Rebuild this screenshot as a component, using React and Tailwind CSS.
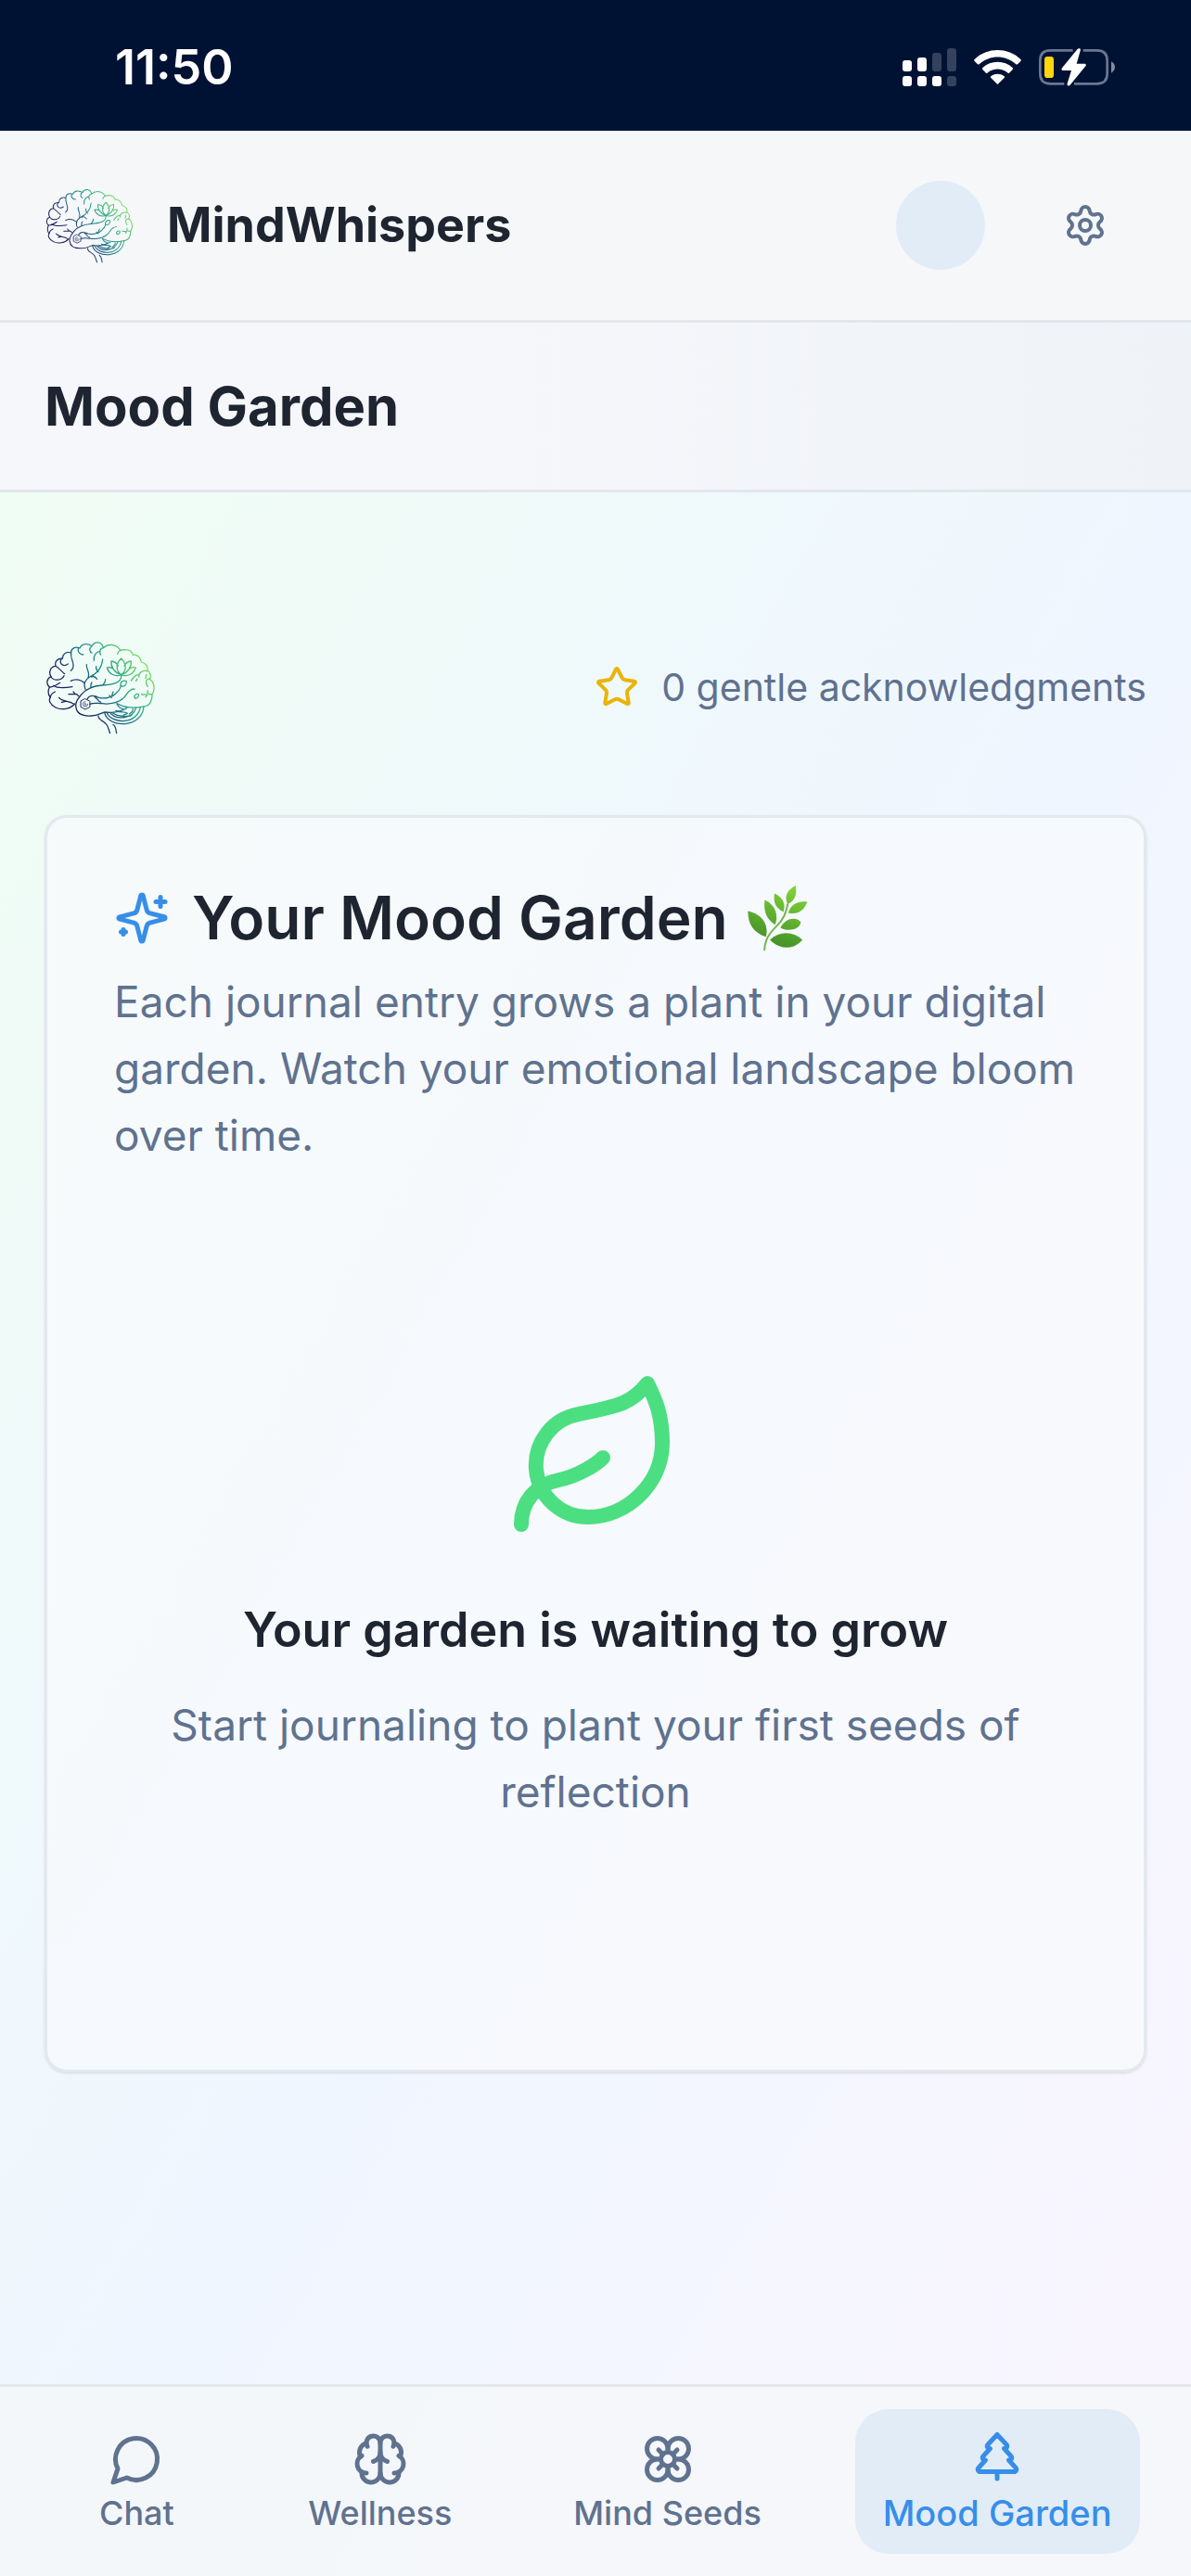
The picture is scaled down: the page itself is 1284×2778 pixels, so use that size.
import { Brain, Flower, Leaf, Settings, Star, TreePine } from "lucide-react";

const navItems = [
  { label: "Chat", icon: ChatBubble },
  { label: "Wellness", icon: Brain },
  { label: "Mind Seeds", icon: Flower },
  { label: "Mood Garden", icon: TreePine, active: true },
];

function ChatBubble({ size = 24 }) {
  return (
    <svg width={size} height={size} viewBox="0 0 24 24" fill="none" stroke="currentColor" strokeWidth="2" strokeLinecap="round" strokeLinejoin="round" aria-hidden="true">
      <path d="M7.9 20A9 9 0 1 0 4 16.1L2 22Z" />
    </svg>
  );
}

function SparklesIcon() {
  return (
    <svg className="size-[60px] shrink-0 text-[#378ee8]" viewBox="0 0 24 24" fill="none" stroke="currentColor" strokeWidth="2" strokeLinecap="round" strokeLinejoin="round" aria-hidden="true">
      <path d="M9.937 15.5A2 2 0 0 0 8.5 14.063l-6.135-1.582a.5.5 0 0 1 0-.962L8.5 9.936A2 2 0 0 0 9.937 8.5l1.582-6.135a.5.5 0 0 1 .963 0L14.063 8.5A2 2 0 0 0 15.5 9.937l6.135 1.581a.5.5 0 0 1 0 .964L15.5 14.063a2 2 0 0 0-1.437 1.437l-1.582 6.135a.5.5 0 0 1-.963 0z" />
      <path d="M20 3v4" />
      <path d="M22 5h-4" />
      <path d="M4 17v2" />
      <path d="M5 18H3" />
    </svg>
  );
}

function HerbIcon() {
  return (
    <svg className="h-[72px] w-[66px] shrink-0" viewBox="30 37 200 218" role="img" aria-label="Herb">
      <defs>
        <linearGradient id="herb" gradientUnits="userSpaceOnUse" x1="190" y1="40" x2="120" y2="240">
          <stop offset="0" stopColor="#84d338" />
          <stop offset="0.5" stopColor="#62b430" />
          <stop offset="1" stopColor="#438f28" />
        </linearGradient>
      </defs>
      <g fill="url(#herb)">
        <path d="M190 40C160 56 152 76 164 101C184 92 196 72 190 40Z" />
        <path d="M121 66C116 94 124 114 150 126C158 102 150 80 121 66Z" />
        <path d="M89 87C84 128 96 150 123 168C134 138 126 104 89 87Z" />
        <path d="M34 123C34 166 52 194 93 207C102 170 84 134 34 123Z" />
        <path d="M228 93C196 90 174 102 166 129C194 136 216 124 228 93Z" />
        <path d="M207 160C196 142 158 142 140 178C160 190 202 188 207 160Z" />
        <path d="M212 217C180 188 138 188 106 217C136 250 184 252 212 217Z" />
      </g>
      <path d="M88 250C90 216 102 198 128 172C150 150 158 132 164 101" fill="none" stroke="#74b54a" strokeWidth="6" strokeLinecap="round" />
    </svg>
  );
}

function BrainLogo({ id, className }) {
  return (
    <svg className={className} viewBox="54 33 360 360" role="img" aria-label="MindWhispers logo">
      <defs>
        <linearGradient id={id} gradientUnits="userSpaceOnUse" x1="130" y1="224" x2="332" y2="84">
          <stop offset="0" stopColor="#20205f" />
          <stop offset="0.14" stopColor="#1d356c" />
          <stop offset="0.33" stopColor="#1b6280" />
          <stop offset="0.5" stopColor="#208a88" />
          <stop offset="0.7" stopColor="#35b07c" />
          <stop offset="1" stopColor="#70da5c" />
        </linearGradient>
      </defs>
      <g fill="none" stroke={`url(#${id})`} strokeWidth="3.8" strokeLinecap="round" strokeLinejoin="round">
        {/* outer folds */}
        <path d="M152 267C138 285 108 288 90 279C72 270 66 255 73 246C64 236 66 222 70 213C58 203 61 185 75 179C66 164 74 146 90 145C86 130 96 119 112 121C112 104 126 97 140 102C139 88 154 80 168 87C176 70 196 72 207 80C218 62 240 66 244 86C262 70 288 74 300 95M290 106C294 88 334 86 340 109C356 106 364 120 368 132C382 136 390 148 387 161C398 166 399 178 394 187C410 196 412 224 402 236C402 262 390 275 372 276C345 282 315 280 290 267" />
        <path d="M75 180C84 194 110 192 117 176M90 145C98 148 104 158 119 170M108 122C100 140 118 148 130 138M140 102C136 120 152 134 146 150C145 154 142 158 139 160M163 88C160 100 170 108 179 108M207 80C196 88 200 100 208 102M244 86C230 88 232 104 236 108M232 97C218 100 212 114 214 127" />
        <path d="M70 213C80 214 95 205 104 199M83 208C95 218 120 216 144 212M73 246C73 238 80 232 88 228M132 236H158L165 242M147 228L154 236M101 247C110 260 128 256 148 267M109 262L122 259" />
        <path d="M242 123C240 150 222 170 200 180C184 190 178 202 186 220M190 140C188 155 202 164 195 184M221 146C219 155 224 160 228 164M139 193C156 184 174 190 181 198M206 180C214 176 220 181 224 187M207 198C202 204 204 208 204 214M251 188C251 198 246 202 243 206" />
        <path d="M387 161C370 158 358 166 359 180M358 174C348 170 340 184 334 192M354 186L350 193M394 187C382 184 378 200 388 211M383 172L381 184M402 236C390 238 384 232 388 224M368 236C374 240 380 234 386 238L381 245M358 236C346 232 342 246 348 250C358 248 360 240 358 236Z" />
        {/* temporal lobe and the stem of the lotus */}
        <path d="M302 172C306 202 270 205 240 207C205 210 188 219 174 236C164 249 152 260 156 278C158 300 178 307 204 306C228 306 236 296 250 294C282 299 300 290 320 281" />
        <path d="M192 252C200 234 220 242 230 247C252 252 276 244 284 234C294 226 298 220 301 211M216 244C226 250 226 258 236 262M200 268C216 262 224 266 240 266C268 270 296 262 310 248C322 236 324 220 345 219M276 228L272 240M264 240L271 247M288 266C292 276 300 282 308 283" />
        <path d="M300 209C298 196 308 190 319 194C320 206 312 214 300 209Z" />
        <path d="M186 251L201 259V277L186 285L171 277V259Z" strokeWidth="3" />
        <path d="M186 260A8 8 0 1 0 194 268M186 265A3 3 0 1 0 189 268" strokeWidth="2" />
        {/* lotus */}
        <path d="M302 173C284 160 284 138 302 120C320 138 320 160 302 173ZM302 173C280 166 268 148 270 129C280 130 288 136 292 144M302 173C324 166 336 148 334 129C324 130 316 136 312 144M302 174C280 180 262 170 256 150C262 148 268 149 273 152M302 174C324 180 342 170 349 150C343 148 337 149 331 152" />
        {/* cerebellum and stem */}
        <path d="M248 296C262 348 370 346 375 276M256 296C274 334 354 334 364 278M266 296C284 320 338 318 350 280M274 296C290 308 322 310 336 304M285 289C300 298 312 290 322 298L310 303M340 284C342 292 334 296 328 300" />
        <path d="M228 306C228 322 246 320 256 336C262 346 262 354 266 362M276 334C286 340 284 352 287 362" />
      </g>
    </svg>
  );
}

function StatusBar() {
  return (
    <div className="flex h-[141px] items-center justify-between bg-[#001234] pl-[124px] pr-[82px] pt-1 text-white">
      <time className="text-[52px] font-semibold leading-[56px]">11:50</time>
      <div className="flex items-center gap-[19px]">
        <svg className="h-[41px] w-[58px]" viewBox="219 156 174 123" fill="currentColor" role="img" aria-label="Signal">
          <rect x="219" y="195" width="30" height="36" rx="9" />
          <rect x="267" y="186" width="30" height="45" rx="9" />
          <rect x="219" y="246" width="30" height="33" rx="9" />
          <rect x="267" y="246" width="30" height="33" rx="9" />
          <rect x="315" y="246" width="30" height="33" rx="9" />
          <g opacity="0.2">
            <rect x="315" y="171" width="30" height="60" rx="9" />
            <rect x="363" y="156" width="30" height="75" rx="9" />
            <rect x="363" y="246" width="30" height="33" rx="9" />
          </g>
        </svg>
        <svg className="h-[37px] w-[51px]" viewBox="450 162 153 111" fill="currentColor" role="img" aria-label="Wi-Fi">
          <path d="M452 192C492 152 561 152 601 192Q604 195 601 198L591 208Q588 210 585 207C552 177 501 177 468 207Q465 210 462 208L452 198Q449 195 452 192Z" />
          <path d="M478 219C505 194 548 194 575 219Q577 222 575 225L564 236Q561 238 558 235C540 220 513 220 495 235Q492 238 489 236L478 225Q476 222 478 219Z" />
          <path d="M506 246C518 237 535 237 547 246Q551 249 548 252L529 271Q526 274 524 271L505 252Q502 249 506 246Z" />
        </svg>
        <svg className="h-[41px] w-[82px]" viewBox="660 156 246 123" role="img" aria-label="Battery charging">
          <path d="M770 163H697Q664 163 664 196V238Q664 271 697 271H742M803 163H848Q881 163 881 196V238Q881 271 848 271H774" fill="none" stroke="#6b7690" strokeWidth="8" />
          <path d="M894 199Q906 205 906 217T894 236Z" fill="#808aa0" />
          <rect x="678" y="183" width="30" height="69" rx="10" fill="#ffd60a" />
          <path d="M784 160Q788 155 792 157Q796 159 794 164L782 206H809Q815 208 811 214L762 274Q758 279 754 277Q750 275 752 270L765 228H737Q731 226 735 220Z" fill="white" />
        </svg>
      </div>
    </div>
  );
}

export default function App() {
  return (
    <div className="flex min-h-screen flex-col bg-[#f5f7f9] font-[Inter,sans-serif] text-[#1e2530]">
      <StatusBar />

      <header className="flex items-center justify-between border-b-3 border-[#e1e7ec] bg-[#f5f7f9] px-12 py-9">
        <div className="flex items-center gap-9">
          <BrainLogo id="logo-header" className="size-24" />
          <span className="text-[52px] font-bold leading-[84px]">MindWhispers</span>
        </div>
        <div className="flex items-center gap-6">
          <button type="button" aria-label="Profile" className="flex size-[132px] items-center justify-center">
            <span className="size-24 rounded-full bg-[#e1ecf7]" />
          </button>
          <button type="button" aria-label="Settings" className="flex size-[132px] items-center justify-center text-[#5f728f]">
            <Settings size={48} />
          </button>
        </div>
      </header>

      <div className="border-b-3 border-[#e1e6ed] bg-linear-to-r from-[#f5f7fb] via-[#f4f6fa] to-[#eff2f6] px-12 py-12">
        <h1 className="text-[58px] font-bold leading-[84px]">Mood Garden</h1>
      </div>

      <div className="flex flex-1 flex-col bg-linear-to-br from-[#f0fdf4] via-[#eff6ff] to-[#faf5ff]">
        <main className="flex-1 px-12 pb-12 pt-[150px]">
          <div className="flex items-center justify-between">
            <BrainLogo id="logo-garden" className="size-[120px]" />
            <div className="flex items-center gap-6 text-[41px] leading-[60px] text-[#5f728f]">
              <Star size={48} className="text-[#eab308]" />
              <span>0 gentle acknowledgments</span>
            </div>
          </div>

          <section className="mt-[78px] rounded-3xl border-3 border-[#e2e8ee] bg-[#f8fafc]/75 p-[72px] shadow-sm">
            <h2 className="flex items-center gap-6 text-[64px] font-semibold leading-[72px]">
              <SparklesIcon />
              <span className="flex items-center gap-5">
                Your Mood Garden
                <HerbIcon />
              </span>
            </h2>
            <p className="mt-[18px] text-[46px] leading-[72px] text-[#5f728f]">
              Each journal entry grows a plant in your digital garden. Watch your emotional landscape bloom over time.
            </p>

            <div className="flex flex-col items-center pb-48 pt-54 text-center">
              <Leaf size={192} className="text-[#4cdf82]" />
              <h3 className="mt-12 text-[52px] font-semibold leading-[84px]">Your garden is waiting to grow</h3>
              <p className="mt-6 text-[46px] leading-[72px] text-[#5f728f]">
                Start journaling to plant your first seeds of reflection
              </p>
            </div>
          </section>
        </main>

        <nav aria-label="Main" className="flex justify-around border-t-3 border-[#e1e7ec] bg-[#f5f7f9]/85 py-6 pl-7 pr-5">
          {navItems.map(({ label, icon: Icon, active }) => (
            <a
              key={label}
              href="#"
              aria-current={active ? "page" : undefined}
              className={
                active
                  ? "flex flex-col items-center gap-2 rounded-[36px] bg-[#e1ecf7] px-[30px] py-5 text-[38px] font-medium leading-[48px] text-[#378ee8]"
                  : "flex min-w-[168px] flex-col items-center gap-1 px-[30px] pb-5 pt-6 text-[36px] font-medium leading-[48px] text-[#5f728f]"
              }
            >
              <Icon size={60} />
              {label}
            </a>
          ))}
        </nav>
      </div>
    </div>
  );
}
